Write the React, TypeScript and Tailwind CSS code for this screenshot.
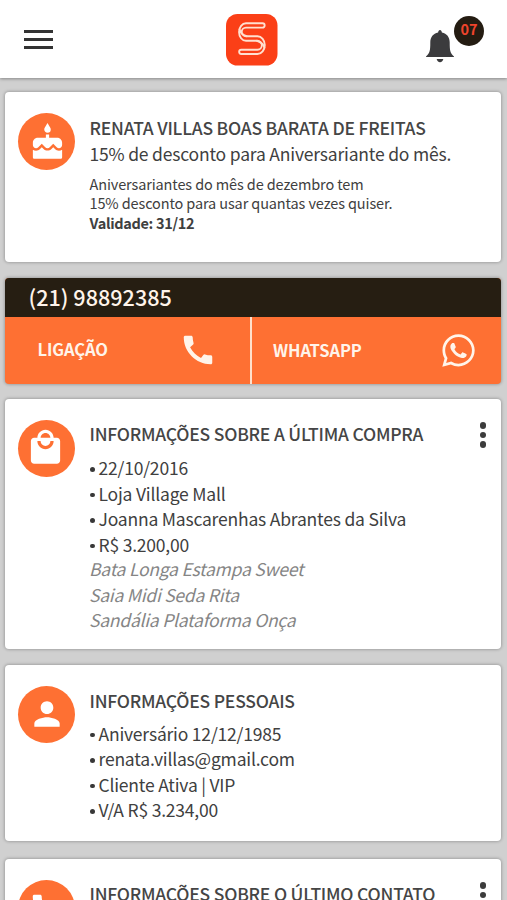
import type { ReactNode } from "react";
import { MdCake, MdCall, MdLocalMall, MdPerson } from "react-icons/md";
import { FaWhatsapp } from "react-icons/fa";

function Logo() {
  return (
    <svg className="h-[52px] w-[52px]" viewBox="0 0 52 52" fill="none">
      <rect width="51.500" height="51.500" rx="11.500" fill="#fb3f17" />
      <g stroke="#ffe0d0" strokeWidth="1.900" strokeLinecap="round" strokeLinejoin="round">
        <path d="M20 9.300H36.500a2.100 2.100 0 0 1 0 4.300H20a4.300 4.300 0 0 0 0 8.600H31.500a7.300 8.900 0 0 1 0 17.800H15.300a2.100 2.100 0 0 1 0-4.300H31.500a4.300 4.400 0 0 0 0-8.900H20a6.900 8.700 0 0 1 0-17.500z" />
        <path d="M13.500 15.500Q14.500 20 20.500 22.200M38.400 33.500Q37.500 29 31 26.800" />
      </g>
    </svg>
  );
}

function Bell() {
  return (
    <svg className="h-[33px] w-7" viewBox="0 0 28 33" fill="#3b3b3d">
      <path d="M14 0c1 0 1.700 1 1.900 2.500 4.900 1 7.800 4.700 7.800 9.700 0 8.500.5 11 4.300 14.300v.5H0v-.5C3.800 23.200 4.300 20.700 4.300 12.200c0-5 2.900-8.700 7.800-9.700C12.300 1 13 0 14 0z" />
      <path d="M10.700 29h6.600c-.3 2-1.600 3.200-3.300 3.200S11 31 10.700 29z" />
    </svg>
  );
}

function Dots() {
  return (
    <div className="flex flex-col gap-[3px]">
      <span className="size-[6.5px] rounded-full bg-[#3c3c3c]" />
      <span className="size-[6.5px] rounded-full bg-[#3c3c3c]" />
      <span className="size-[6.5px] rounded-full bg-[#3c3c3c]" />
    </div>
  );
}

function Card({ icon, menu, className, children }: { icon: ReactNode; menu?: boolean; className: string; children: ReactNode }) {
  return (
    <section className={`flex shrink-0 rounded-[4px] bg-white pl-[13.5px] shadow-[0_0_3px_1px_rgba(0,0,0,0.22)] ${className}`}>
      <div className="mt-[21px] flex size-[57px] shrink-0 items-center justify-center rounded-full bg-[#fe7033] text-white">{icon}</div>
      <div className="ml-[14.5px] w-[360px] whitespace-nowrap pt-[22px]">{children}</div>
      {menu && (
        <div className="ml-[30px] mt-[23px]">
          <Dots />
        </div>
      )}
    </section>
  );
}

function Title({ children }: { children: ReactNode }) {
  return <h2 className="text-[17.5px] font-medium leading-[26px] tracking-[-0.215px] text-[#454545]">{children}</h2>;
}

function Item({ children }: { children: ReactNode }) {
  return (
    <li className="flex items-center">
      <span className="ml-[0.500px] mr-[4px] mt-[3px] size-[4.500px] rounded-full bg-[#383838]" />
      {children}
    </li>
  );
}

export default function App() {
  return (
    <div className="flex h-[900px] w-[507px] flex-col overflow-hidden bg-[#d0d0d0] font-['Noto_Sans_CJK_SC','Noto_Sans',sans-serif] text-[#404040]">
      <header className="flex h-[78px] shrink-0 items-start justify-between bg-white pl-6 shadow-[0_1px_3px_rgba(0,0,0,0.35)]">
        <div className="mt-[29.500px] flex w-[201px] flex-col gap-[5px]">
          <span className="h-[3px] w-[29px] bg-[#333]" />
          <span className="h-[3px] w-[29px] bg-[#333]" />
          <span className="h-[3px] w-[29px] bg-[#333]" />
        </div>
        <div className="mt-[13.500px]">
          <Logo />
        </div>
        <div className="flex w-[229px] justify-end pr-[23px]">
          <div className="mr-[0.500px] mt-[29.500px]">
            <Bell />
          </div>
          <div className="mt-[15.500px] flex size-[30px] items-center justify-center rounded-full bg-[#241c12] pb-[2px] text-[14.500px] font-bold leading-none text-[#f0442c]">
            07
          </div>
        </div>
      </header>

      <main className="flex flex-col pl-[4.500px] pr-[6.500px] pt-[14px]">
        <Card className="h-[170px]" icon={<MdCake size={39} className="ml-[1.500px] mt-[2px]" />}>
          <div className="pt-[0.700px]">
            <Title>RENATA VILLAS BOAS BARATA DE FREITAS</Title>
          </div>
          <p className="text-[17.500px] leading-[25px] tracking-[-0.190px]">15% de desconto para Aniversariante do mês.</p>
          <div className="mt-[8.300px] text-[14.500px] leading-[19.300px] tracking-[-0.125px]">
            <p>Aniversariantes do mês de dezembro tem</p>
            <p>15% desconto para usar quantas vezes quiser.</p>
            <p className="font-bold tracking-[-0.320px]">Validade: 31/12</p>
          </div>
        </Card>

        <section className="mt-4 flex h-[105.500px] shrink-0 flex-col overflow-hidden rounded-[4px] bg-[#fe7033] text-[#fff4ea] shadow-[0_0_3px_1px_rgba(0,0,0,0.22)]">
          <div className="h-[39px] bg-[#261e12] pl-6 text-[21.600px] font-medium leading-[38px]">(21) 98892385</div>
          <div className="flex flex-1 text-[16.500px] font-bold leading-[26px]">
            <button className="flex w-[247.500px] items-center justify-between border-r-2 border-[#ffe0cc] pl-[33px] pr-[33px]">
              <span className="mb-[2px] tracking-[-0.100px]">LIGAÇÃO</span>
              <MdCall size={38} />
            </button>
            <button className="flex flex-1 items-center justify-between pl-[21px] pr-[23.500px]">
              <span className="tracking-[-0.100px]">WHATSAPP</span>
              <FaWhatsapp size={37} />
            </button>
          </div>
        </section>

        <Card className="mt-[15.500px] h-[250px]" menu icon={<MdLocalMall size={39} className="mb-[3px] mr-[1.500px]" />}>
          <Title>INFORMAÇÕES SOBRE A ÚLTIMA COMPRA</Title>
          <ul className="mt-2 text-[17.500px] leading-[25.500px] tracking-[-0.200px]">
            <Item>22/10/2016</Item>
            <Item>Loja Village Mall</Item>
            <Item>Joanna Mascarenhas Abrantes da Silva</Item>
            <Item>R$ 3.200,00</Item>
          </ul>
          <div className="-ml-[0.500px] -mt-[0.700px] text-[17.500px] italic leading-[25.500px] tracking-[-0.230px] text-[#858585]">
            <p>Bata Longa Estampa Sweet</p>
            <p>Saia Midi Seda Rita</p>
            <p>Sandália Plataforma Onça</p>
          </div>
        </Card>

        <Card className="mt-4 h-[176px]" icon={<MdPerson size={38} className="mb-[2px] ml-[1.500px]" />}>
          <div className="pt-[0.700px]">
            <Title>INFORMAÇÕES PESSOAIS</Title>
          </div>
          <ul className="mt-[7.300px] text-[17.500px] leading-[25.500px] tracking-[-0.200px]">
            <Item>Aniversário 12/12/1985</Item>
            <Item>renata.villas@gmail.com</Item>
            <Item>Cliente Ativa | VIP</Item>
            <Item>V/A R$ 3.234,00</Item>
          </ul>
        </Card>

        <Card className="mt-[18px] h-[176px]" menu icon={<MdCall size={38} />}>
          <Title>INFORMAÇÕES SOBRE O ÚLTIMO CONTATO</Title>
        </Card>
      </main>
    </div>
  );
}
